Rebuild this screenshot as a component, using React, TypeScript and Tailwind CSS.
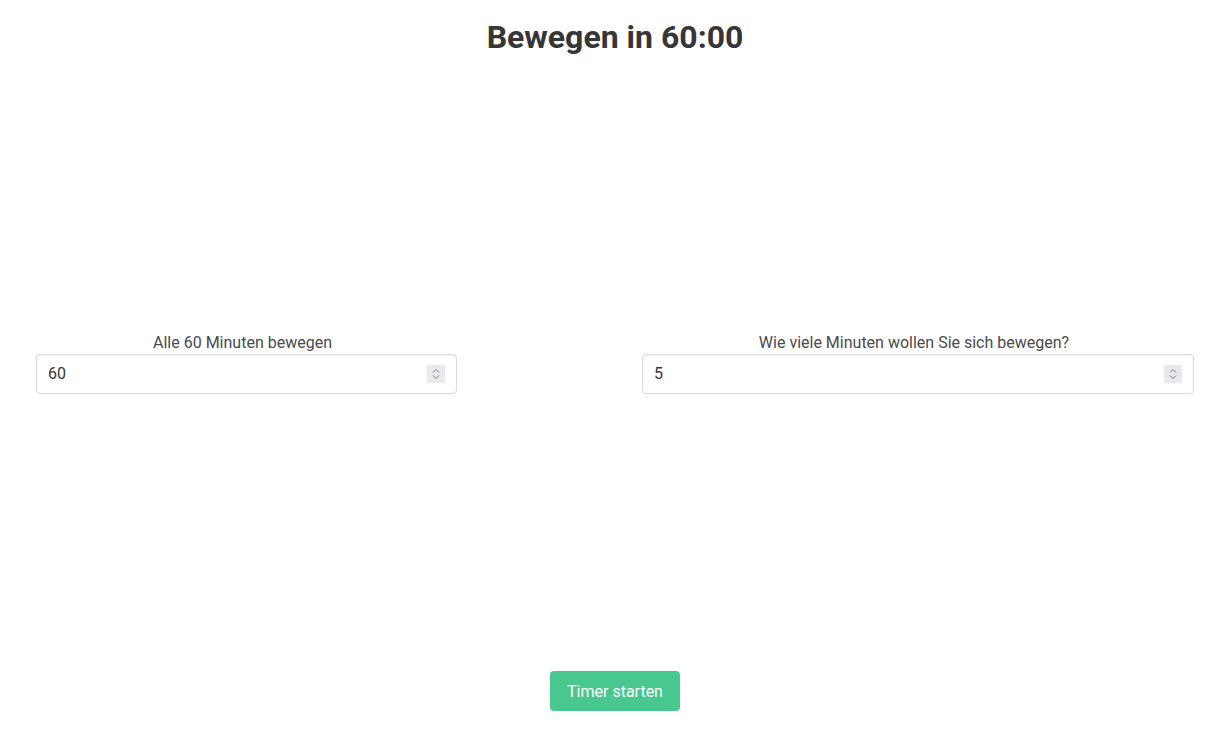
import React, { useState } from 'react';

const Spinner: React.FC = () => (
  <span className="pointer-events-none absolute right-[12px] top-1/2 flex h-[18px] w-[18px] -translate-y-1/2 items-center justify-center bg-[#e9e9ed]">
    <svg width="10" height="14" viewBox="0 0 10 14" fill="none" stroke="#7a7a7a" strokeWidth="1">
      <path d="M2 5.5 L5 2.5 L8 5.5" />
      <path d="M2 8.5 L5 11.5 L8 8.5" />
    </svg>
  </span>
);

const inputCls =
  "block h-10 w-full appearance-none rounded border border-[#dbdbdb] bg-white pl-[11px] pr-[40px] text-base text-[#363636] shadow-[inset_0_1px_2px_rgba(10,10,10,0.05)] outline-none [appearance:textfield] [&::-webkit-inner-spin-button]:appearance-none [&::-webkit-outer-spin-button]:appearance-none";

const App: React.FC = () => {
  const [interval, setInterval] = useState('60');
  const [duration, setDuration] = useState('5');

  return (
    <div className="flex h-screen flex-col justify-between bg-white pt-[18px] pb-[32px] font-['Roboto',sans-serif] text-[#4a4a4a]">
      <h1 className="mt-[1px] mb-[-1px] pl-[15px] text-center text-[32px] font-bold leading-[36px] text-[#363636]">
        Bewegen in {interval}:00
      </h1>

      <div className="flex items-end justify-between pl-[36px] pr-[21px]">
        <div className="w-[421px]">
          <label className="block pr-2 text-center text-base leading-[22px]">Alle {interval} Minuten bewegen</label>
          <div className="relative">
            <input type="number" value={interval} onChange={(e) => setInterval(e.target.value)} className={inputCls} />
            <Spinner />
          </div>
        </div>
        <div className="w-[552px]">
          <label className="block pr-2 text-center text-base leading-[22px]">Wie viele Minuten wollen Sie sich bewegen?</label>
          <div className="relative">
            <input type="number" value={duration} onChange={(e) => setDuration(e.target.value)} className={inputCls} />
            <Spinner />
          </div>
        </div>
      </div>

      <div className="flex justify-center pl-[15px]">
        <button className="h-10 w-[130px] rounded bg-[#48c78e] pt-[2px] text-base text-white">Timer starten</button>
      </div>
    </div>
  );
};

export default App;
